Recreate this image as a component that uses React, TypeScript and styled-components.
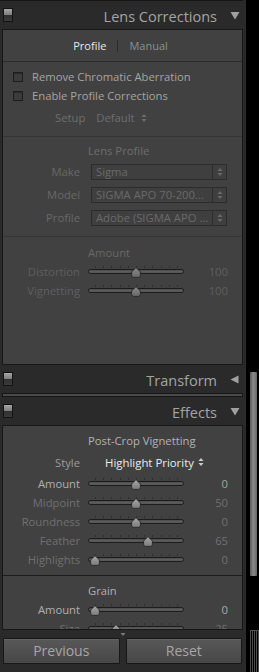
import React, { useId } from 'react';
import styled, { createGlobalStyle, css } from 'styled-components';

const GlobalStyle = createGlobalStyle`
  html, body { margin: 0; padding: 0; background: #2a2a2a; }
  body { font-family: "Open Sans", "Noto Sans", sans-serif; font-size: 11.25px; }
  * { box-sizing: border-box; }
`;

const Page = styled.div`
  display: flex;
  width: 259px;
  height: 672px;
  overflow: hidden;
  background: #2a2a2a;
`;

const Main = styled.div`
  width: 246px;
  flex: none;
  display: flex;
  flex-direction: column;
`;

const TopRule = styled.div`
  height: 1px;
  margin-right: 3px;
  background: #161616;
  flex: none;
`;

const PanelHeader = styled.div`
  height: 28px;
  flex: none;
  display: flex;
  align-items: center;
  padding: 0 6px 0 3px;
`;

const Toggle = styled.div`
  width: 10px;
  height: 14px;
  border: 1px solid #131313;
  background: linear-gradient(#a6a6a6, #7c7c7c 50%, #2f2f2f 50%, #3b3b3b);
`;

const HeaderTitle = styled.div`
  margin-left: auto;
  padding-top: 3px;
  font-size: 14.5px;
  color: #a4a4a4;
  line-height: 20px;
`;

const Disclosure = styled.svg`
  margin-left: 13px;
  width: 10px;
  height: 10px;
  flex: none;
`;

const Panel = styled.div<{ $height?: number }>`
  margin: 0 3px 0 2px;
  border: 1px solid #171717;
  background: #414141;
  display: flex;
  flex-direction: column;
  overflow: hidden;
  flex: none;
  ${(p) => (p.$height ? css`height: ${p.$height}px;` : css`flex: 1; min-height: 0;`)}
`;

const CollapsedBar = styled.div`
  height: 4px;
  flex: none;
  margin: 0 3px 0 2px;
  border: 1px solid #151515;
  background: #4a4a4a;
`;

const Tabs = styled.div`
  height: 32px;
  flex: none;
  display: flex;
  align-items: center;
  justify-content: center;
  gap: 11px;
  padding-right: 4px;
  border-bottom: 1px solid #2c2c2c;
  font-size: 11px;
`;

const Tab = styled.span<{ $active?: boolean }>`
  color: ${(p) => (p.$active ? '#e8e8e8' : '#8e8e8e')};
`;

const TabSep = styled.span`
  width: 1px;
  height: 12px;
  background: #2c2c2c;
`;

const Section = styled.div<{ $pt?: number; $pb?: number; $divider?: 'soft' | 'strong'; $grow?: boolean }>`
  flex: ${(p) => (p.$grow ? '1' : 'none')};
  display: flex;
  flex-direction: column;
  padding-top: ${(p) => p.$pt ?? 0}px;
  padding-bottom: ${(p) => p.$pb ?? 0}px;
  ${(p) =>
    p.$divider === 'soft' &&
    css`
      border-top: 1px solid #363636;
    `}
  ${(p) =>
    p.$divider === 'strong' &&
    css`
      border-top: 1px solid #1c1c1c;
    `}
`;

const CheckRow = styled.div`
  height: 19px;
  display: flex;
  align-items: center;
  padding-left: 10px;
  gap: 9px;
`;

const Checkbox = styled.span`
  width: 10px;
  height: 10px;
  border: 1px solid #1e1e1e;
  background: #3c3c3c;
  box-shadow: inset 0 1px 1px rgba(0, 0, 0, 0.3);
`;

const CheckLabel = styled.span`
  color: #a4a4a4;
`;

const SetupRow = styled.div`
  height: 19px;
  margin-top: 3px;
  display: flex;
  align-items: center;
  padding-left: 52px;
  color: #6e6e6e;
`;

const SetupValue = styled.span`
  margin-left: 11px;
  display: flex;
  align-items: center;
  gap: 6px;
`;

const Heading = styled.div<{ $tone: string }>`
  height: 18px;
  line-height: 18px;
  padding-left: 85px;
  color: ${(p) => p.$tone};
`;

const Row = styled.div<{ $h: number }>`
  height: ${(p) => p.$h}px;
  display: flex;
  align-items: center;
`;

const Label = styled.span<{ $tone: string }>`
  width: 77px;
  flex: none;
  text-align: right;
  color: ${(p) => p.$tone};
`;

const Value = styled.span<{ $tone: string }>`
  width: 44px;
  flex: none;
  text-align: right;
  color: ${(p) => p.$tone};
`;

const Select = styled.div`
  margin-left: 11px;
  width: 136px;
  height: 16px;
  border: 1px solid #2c2c2c;
  background: #3f3f3f;
  display: flex;
  align-items: center;
  color: #6a6a6a;
`;

const SelectText = styled.span`
  flex: 1;
  padding-left: 4px;
  white-space: nowrap;
  overflow: hidden;
  line-height: 14px;
`;

const SelectArrows = styled.span`
  width: 14px;
  height: 100%;
  border-left: 1px solid #2c2c2c;
  display: flex;
  align-items: center;
  justify-content: center;
`;

const StyleValue = styled.span`
  margin-left: 25px;
  display: flex;
  align-items: center;
  gap: 4px;
  color: #ececec;
  font-size: 11.4px;
`;

const SliderBox = styled.div`
  position: relative;
  width: 96px;
  height: 19px;
  margin-left: 8px;
  flex: none;
`;

const Ticks = styled.div`
  position: absolute;
  left: 7px;
  right: 6px;
  top: 4px;
  height: 2px;
  display: flex;
  justify-content: space-between;
`;

const Tick = styled.span`
  width: 1px;
  height: 2px;
  background: #2e2e2e;
`;

const Track = styled.div`
  position: absolute;
  left: 0;
  right: 0;
  top: 7px;
  height: 5px;
  border: 1px solid #1c1c1c;
  border-radius: 3px;
  background: linear-gradient(#4b4b4b, #5f5f5f 60%, #525252);
`;

const ThumbSvg = styled.svg`
  position: absolute;
  top: 5px;
  width: 10px;
  height: 11px;
`;

const Footer = styled.div`
  height: 42px;
  flex: none;
  display: flex;
  flex-direction: column;
  padding: 0 4px 0 3px;
`;

const MoreArrow = styled.svg`
  align-self: center;
  width: 6px;
  height: 8px;
  flex: none;
`;

const Buttons = styled.div`
  display: grid;
  grid-template-columns: 1fr 1fr;
  gap: 6px;
  height: 26px;
`;

const Button = styled.button`
  height: 26px;
  border: 1px solid #171717;
  border-radius: 1px;
  background: linear-gradient(#585858, #474747);
  box-shadow: inset 0 1px 0 rgba(255, 255, 255, 0.07);
  color: #a6a6a6;
  font-family: "Open Sans", "Noto Sans", sans-serif;
  font-size: 14px;
  padding: 0;
  line-height: 24px;
`;

const ScrollTrack = styled.div`
  width: 13px;
  flex: none;
  background: #000;
  display: flex;
  flex-direction: column;
  padding-left: 4px;
`;

const ScrollThumb = styled.div`
  margin-top: 372px;
  width: 7px;
  height: 204px;
  border-radius: 1px;
  background: linear-gradient(to right, #5c5c5c, #8a8a8a 50%, #666666);
`;

const Grip = styled.div`
  margin-top: auto;
  width: 9px;
  height: 42px;
  border-top: 1px solid #505050;
  background: repeating-linear-gradient(to right, #4c4c4c 0 1px, #000 1px 2px);
`;

const Spinner: React.FC<{ color: string }> = ({ color }) => (
  <svg width="6" height="10" viewBox="0 0 6 10">
    <polygon points="0.5,4 3,1 5.5,4" fill={color} />
    <polygon points="0.5,6 3,9 5.5,6" fill={color} />
  </svg>
);

const Thumb: React.FC<{ left: number; dim?: boolean }> = ({ left, dim }) => {
  const id = useId().replace(/:/g, '');
  return (
    <ThumbSvg viewBox="0 0 10 11" style={{ left }}>
      <defs>
        <linearGradient id={id} x1="0" y1="0" x2="0" y2="1">
          <stop offset="0" stopColor={dim ? '#8a8a8a' : '#a8a8a8'} />
          <stop offset="1" stopColor={dim ? '#686868' : '#7a7a7a'} />
        </linearGradient>
      </defs>
      <path
        d="M5 0.6 L9.4 5 V8.4 Q9.4 10.4 7.4 10.4 H2.6 Q0.6 10.4 0.6 8.4 V5 Z"
        fill={`url(#${id})`}
        stroke="#262626"
        strokeWidth="0.9"
      />
    </ThumbSvg>
  );
};

const Slider: React.FC<{ f: number; dim?: boolean }> = ({ f, dim }) => (
  <SliderBox>
    <Ticks>
      {Array.from({ length: 11 }).map((_, i) => (
        <Tick key={i} />
      ))}
    </Ticks>
    <Track />
    <Thumb left={2 + f * 82} dim={dim} />
  </SliderBox>
);

const SliderRow: React.FC<{ label: string; value: string; f: number; tone: string; valueTone?: string; dim?: boolean }> = ({
  label,
  value,
  f,
  tone,
  valueTone,
  dim,
}) => (
  <Row $h={19}>
    <Label $tone={tone}>{label}</Label>
    <Slider f={f} dim={dim} />
    <Value $tone={valueTone ?? tone}>{value}</Value>
  </Row>
);

const SelectRow: React.FC<{ label: string; value: string }> = ({ label, value }) => (
  <Row $h={23}>
    <Label $tone="#686868">{label}</Label>
    <Select>
      <SelectText>{value}</SelectText>
      <SelectArrows>
        <Spinner color="#6a6a6a" />
      </SelectArrows>
    </Select>
  </Row>
);

const DownTri = () => (
  <Disclosure viewBox="0 0 10 10">
    <polygon points="0.5,2 9.5,2 5,9.5" fill="#a0a0a0" />
  </Disclosure>
);

const LeftTri = () => (
  <Disclosure viewBox="0 0 10 10">
    <polygon points="0.5,5.5 8.5,1.5 8.5,9.5" fill="#a0a0a0" />
  </Disclosure>
);

export default function App() {
  const dimLabel = '#5f5f5f';
  const effDim = '#707070';
  const effBright = '#b0b0b0';
  return (
    <>
      <GlobalStyle />
      <Page>
        <Main>
          <TopRule />
          <PanelHeader>
            <Toggle />
            <HeaderTitle>Lens Corrections</HeaderTitle>
            <DownTri />
          </PanelHeader>
          <Panel $height={336}>
            <Tabs>
              <Tab $active>Profile</Tab>
              <TabSep />
              <Tab>Manual</Tab>
            </Tabs>
            <Section $pt={5} $pb={9}>
              <CheckRow>
                <Checkbox />
                <CheckLabel>Remove Chromatic Aberration</CheckLabel>
              </CheckRow>
              <CheckRow>
                <Checkbox />
                <CheckLabel>Enable Profile Corrections</CheckLabel>
              </CheckRow>
              <SetupRow>
                <span>Setup</span>
                <SetupValue>
                  Default
                  <Spinner color="#6e6e6e" />
                </SetupValue>
              </SetupRow>
            </Section>
            <Section $divider="soft" $pt={5} $pb={7}>
              <Heading $tone="#6e6e6e">Lens Profile</Heading>
              <SelectRow label="Make" value="Sigma" />
              <SelectRow label="Model" value="SIGMA APO 70-200..." />
              <SelectRow label="Profile" value="Adobe (SIGMA APO ..." />
            </Section>
            <Section $divider="soft" $pt={7} $grow>
              <Heading $tone="#686868">Amount</Heading>
              <SliderRow label="Distortion" value="100" f={0.5} tone={dimLabel} dim />
              <SliderRow label="Vignetting" value="100" f={0.5} tone={dimLabel} dim />
            </Section>
          </Panel>
          <PanelHeader>
            <Toggle />
            <HeaderTitle>Transform</HeaderTitle>
            <LeftTri />
          </PanelHeader>
          <CollapsedBar />
          <PanelHeader>
            <Toggle />
            <HeaderTitle>Effects</HeaderTitle>
            <DownTri />
          </PanelHeader>
          <Panel>
            <Section $pt={6} $pb={6}>
              <Heading $tone="#b2b2b2">Post-Crop Vignetting</Heading>
              <Row $h={24}>
                <Label $tone="#9c9c9c">Style</Label>
                <StyleValue>
                  Highlight Priority
                  <Spinner color="#cfcfcf" />
                </StyleValue>
              </Row>
              <SliderRow label="Amount" value="0" f={0.5} tone={effBright} valueTone="#a4a4a4" />
              <SliderRow label="Midpoint" value="50" f={0.5} tone={effDim} />
              <SliderRow label="Roundness" value="0" f={0.5} tone={effDim} />
              <SliderRow label="Feather" value="65" f={0.65} tone={effDim} />
              <SliderRow label="Highlights" value="0" f={0} tone={effDim} />
            </Section>
            <Section $divider="strong" $pt={6}>
              <Heading $tone="#b0b0b0">Grain</Heading>
              <SliderRow label="Amount" value="0" f={0} tone={effBright} valueTone="#a8a8a8" />
              <SliderRow label="Size" value="25" f={0.25} tone={effDim} />
            </Section>
          </Panel>
          <Footer>
            <MoreArrow viewBox="0 0 6 8">
              <polygon points="0.5,3 5.5,3 3,6" fill="#7a7a7a" />
            </MoreArrow>
            <Buttons>
              <Button>Previous</Button>
              <Button>Reset</Button>
            </Buttons>
          </Footer>
        </Main>
        <ScrollTrack>
          <ScrollThumb />
          <Grip />
        </ScrollTrack>
      </Page>
    </>
  );
}
